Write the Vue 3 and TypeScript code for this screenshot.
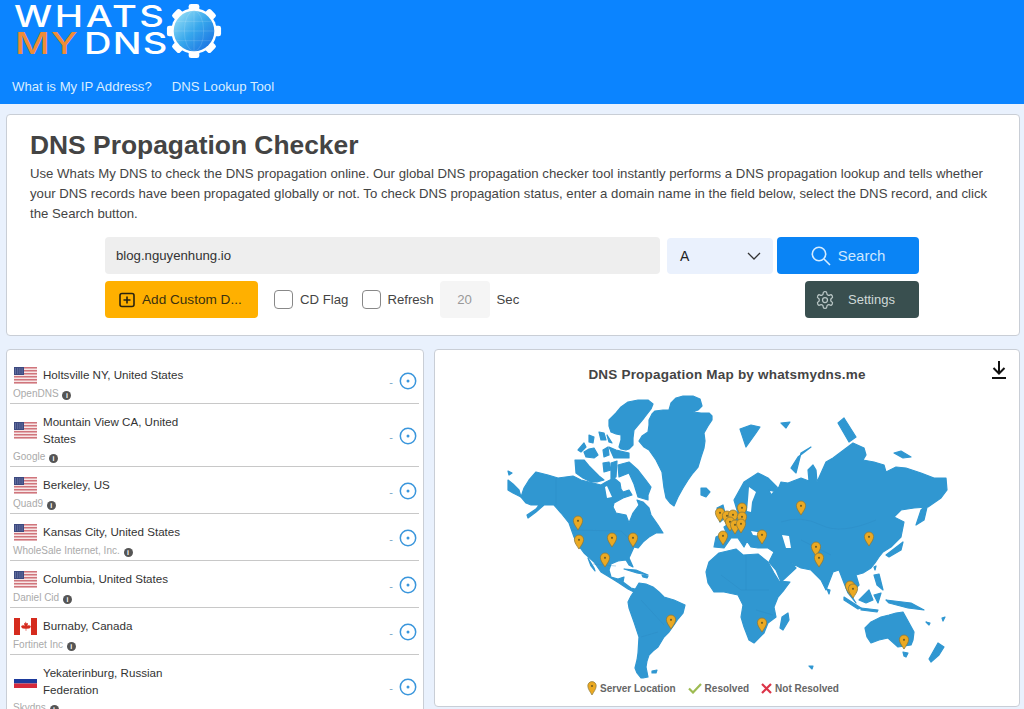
<template>
  <div class="page">
    <header class="topbar">
      <div class="logo">
        <div class="logo-text">
          <div class="logo-line">WHATS</div>
          <div class="logo-line logo-line-two"><span class="logo-my">MY</span> DNS</div>
        </div>
        <svg class="logo-gear" viewBox="0 0 60 60" width="58" height="58">
          <defs>
            <linearGradient id="globe" x1="0" y1="0" x2="1" y2="1">
              <stop offset="0" stop-color="#a5e8f7" />
              <stop offset="0.5" stop-color="#36a6ec" />
              <stop offset="1" stop-color="#1668e0" />
            </linearGradient>
          </defs>
          <g fill="#fff">
            <rect v-for="a in gearTeeth" :key="a" x="24.500" y="2" width="11" height="12" rx="2.500" :transform="`rotate(${a} 30 30)`" />
          </g>
          <circle cx="30" cy="30" r="23.500" fill="#fff" />
          <circle cx="30" cy="30" r="21" fill="url(#globe)" />
          <g fill="none" stroke="#fff" stroke-opacity="0.18" stroke-width="0.8">
            <ellipse cx="30" cy="30" rx="10" ry="21" />
            <path d="M30 9V51M9 30H51M12 20H48M12 40H48" />
          </g>
        </svg>
      </div>
      <nav class="topnav">
        <a>What is My IP Address?</a>
        <a>DNS Lookup Tool</a>
      </nav>
    </header>

    <section class="card intro">
      <h1>DNS Propagation Checker</h1>
      <p>Use Whats My DNS to check the DNS propagation online. Our global DNS propagation checker tool instantly performs a DNS propagation lookup and tells whether your DNS records have been propagated globally or not. To check DNS propagation status, enter a domain name in the field below, select the DNS record, and click the Search button.</p>

      <div class="form">
        <div class="form-row">
          <div class="domain">blog.nguyenhung.io</div>
          <div class="record">
            <span>A</span>
            <svg width="14" height="8" viewBox="0 0 14 8" fill="none" stroke="#333" stroke-width="1.3"><path d="M1 1l6 6 6-6" /></svg>
          </div>
          <button class="search">
            <svg width="20" height="20" viewBox="0 0 20 20" fill="none" stroke="#d5ecff" stroke-width="1.6"><circle cx="8" cy="8" r="6.700" /><path d="M13 13l6 6" /></svg>
            <span>Search</span>
          </button>
        </div>
        <div class="form-row">
          <button class="custom">
            <svg width="16" height="16" viewBox="0 0 16 16" fill="none" stroke="#2b2410" stroke-width="1.600"><rect x="1" y="1.500" width="14" height="13" rx="2" /><path d="M8 4.500v7M4.500 8h7" /></svg>
            <span>Add Custom D...</span>
          </button>
          <span class="check"></span><span class="check-label">CD Flag</span>
          <span class="check check-second"></span><span class="check-label refresh-label">Refresh</span>
          <div class="secs">20</div>
          <span class="check-label sec-label">Sec</span>
          <button class="settings">
            <svg width="20" height="20" viewBox="0 0 24 24" fill="none" stroke="#b9c6c5" stroke-width="1.500" stroke-linejoin="round"><path d="M12.220 2h-.44a2 2 0 0 0-2 2v.18a2 2 0 0 1-1 1.730l-.43.25a2 2 0 0 1-2 0l-.15-.08a2 2 0 0 0-2.730.73l-.22.38a2 2 0 0 0 .73 2.730l.15.1a2 2 0 0 1 1 1.720v.51a2 2 0 0 1-1 1.740l-.15.09a2 2 0 0 0-.73 2.730l.22.38a2 2 0 0 0 2.730.73l.15-.08a2 2 0 0 1 2 0l.43.25a2 2 0 0 1 1 1.730V20a2 2 0 0 0 2 2h.44a2 2 0 0 0 2-2v-.18a2 2 0 0 1 1-1.730l.43-.25a2 2 0 0 1 2 0l.15.08a2 2 0 0 0 2.730-.73l.22-.39a2 2 0 0 0-.73-2.730l-.15-.08a2 2 0 0 1-1-1.740v-.5a2 2 0 0 1 1-1.740l.15-.09a2 2 0 0 0 .73-2.730l-.22-.38a2 2 0 0 0-2.730-.73l-.15.08a2 2 0 0 1-2 0l-.43-.25a2 2 0 0 1-1-1.730V4a2 2 0 0 0-2-2z" /><circle cx="12" cy="12" r="3" /></svg>
            <span>Settings</span>
          </button>
        </div>
      </div>
    </section>

    <div class="results">
      <section class="card servers">
        <div v-for="s in servers" :key="s.city" class="server">
          <div class="server-info">
            <div class="server-city">
              <svg class="flag" viewBox="0 0 23 17" width="23" height="17">
                <template v-if="s.flag === 'us'">
                  <rect width="23" height="17" fill="#f7e6e6" />
                  <rect v-for="i in 6" :key="i" y="0" :transform="`translate(0 ${(i - 1) * 3})`" width="23" height="1.500" fill="#d0757c" />
                  <rect width="10" height="8" fill="#3d4a80" />
                  <path d="M1 2h8M1 4h8M1 6h8" stroke="#aab4d8" stroke-width="0.7" stroke-dasharray="1 1.200" />
                </template>
                <template v-else-if="s.flag === 'ca'">
                  <rect width="23" height="17" fill="#fff" />
                  <rect width="6" height="17" fill="#d52b1e" />
                  <rect x="17" width="6" height="17" fill="#d52b1e" />
                  <path d="M11.500 3.500l1.200 2 1.300-.6-.5 3 1.800-1.200.5 1.300 1.200-.2-.7 2-1 .7-3 .2v2h-.6v-2l-3-.2-1-.7-.7-2 1.200.2.500-1.300 1.800 1.200-.5-3 1.300.6z" fill="#d52b1e" />
                </template>
                <template v-else>
                  <rect y="2" width="23" height="4" fill="#fff" />
                  <rect y="6" width="23" height="4.500" fill="#1c3a9c" />
                  <rect y="10.500" width="23" height="4.500" fill="#d5293b" />
                </template>
              </svg>
              <span class="city-name">{{ s.city }}</span>
            </div>
            <div class="server-org">{{ s.org }} <span class="info">i</span></div>
          </div>
          <div class="server-status">
            <span class="dash">-</span>
            <svg width="18" height="18" viewBox="0 0 18 18" fill="none"><circle cx="9" cy="9" r="7.700" stroke="#3a96dc" stroke-width="1.500" /><circle cx="9" cy="9" r="1.500" fill="#3a96dc" /></svg>
          </div>
        </div>
      </section>

      <section class="card map-card">
        <h2>DNS Propagation Map by whatsmydns.me</h2>
        <svg class="download" width="18" height="20" viewBox="0 0 18 20" fill="none" stroke="#111" stroke-width="2"><path d="M9 1v12M3.500 8l5.500 5.500L14.500 8M2 18h14" /></svg>
        <svg class="map" viewBox="434 390 584 290" width="584" height="290">
          <g fill="#3097d1" stroke="#3097d1" stroke-width="1.200" stroke-linejoin="round">
            <polygon v-for="(p, i) in land" :key="i" :points="p" />
          </g>
          <g fill="#fff">
            <polygon v-for="(p, i) in water" :key="i" :points="p" />
          </g>
          <g fill="none" stroke="#2b87bf" stroke-width="0.5" stroke-opacity="0.7">
            <path v-for="(d, i) in borders" :key="i" :d="d" />
          </g>
          <g v-for="(p, i) in pins" :key="i" :transform="`translate(${p[0]} ${p[1]}) scale(1.150)`">
            <path d="M0 7C-2 3.800-4 1.500-4-1.200a4 4 0 0 1 8 0C4 1.500 2 3.800 0 7z" fill="#eba922" stroke="#8c7a3c" stroke-width="0.7" />
            <circle cx="0" cy="-1" r="0.900" fill="#6b5a22" />
          </g>
        </svg>
        <div class="legend">
          <span class="legend-item">
            <svg width="10" height="15" viewBox="-5 -6 10 15"><path d="M0 8C-2 4.500-4.200 2-4.200-1.200a4.200 4.200 0 0 1 8.400 0C4.200 2 2 4.500 0 8z" fill="#eba922" stroke="#8c7a3c" stroke-width="0.7" /><circle cx="0" cy="-1" r="1" fill="#6b5a22" /></svg>
            Server Location
          </span>
          <span class="legend-item">
            <svg width="14" height="11" viewBox="0 0 14 11" fill="none" stroke="#9dbb52" stroke-width="2.200"><path d="M1 5.500l4 4 8-8.500" /></svg>
            Resolved
          </span>
          <span class="legend-item">
            <svg width="11" height="11" viewBox="0 0 11 11" fill="none" stroke="#dc3448" stroke-width="2.200"><path d="M1 1l9 9M10 1l-9 9" /></svg>
            Not Resolved
          </span>
        </div>
      </section>
    </div>
  </div>
</template>

<script setup lang="ts">
interface Server {
  city: string
  org: string
  flag: 'us' | 'ca' | 'ru'
}

const gearTeeth = [0, 45, 90, 135, 180, 225, 270, 315]

const servers: Server[] = [
  { city: 'Holtsville NY, United States', org: 'OpenDNS', flag: 'us' },
  { city: 'Mountain View CA, United States', org: 'Google', flag: 'us' },
  { city: 'Berkeley, US', org: 'Quad9', flag: 'us' },
  { city: 'Kansas City, United States', org: 'WholeSale Internet, Inc.', flag: 'us' },
  { city: 'Columbia, United States', org: 'Daniel Cid', flag: 'us' },
  { city: 'Burnaby, Canada', org: 'Fortinet Inc', flag: 'ca' },
  { city: 'Yekaterinburg, Russian Federation', org: 'Skydns', flag: 'ru' }
]

// map shapes are in page coordinates, traced by hand
const land: string[] = [
  // greenland
  '670,403 675,398 682,396 692,396 699,399 701,406 697,410 692,412 700,413 708,413 711,416 711,420 707,426 703,433 704,441 703,448 700,457 697,467 692,473 687,480 682,488 677,497 673,506 669,503 665,498 663,488 662,480 661,472 655,460 648,450 643,447 638,441 641,436 647,432 648,425 648,420 651,414 654,411 662,410 668,410',
  // arctic canada
  '615,413 620,407 627,402 637,400 647,400 652,404 650,409 643,418 638,424 633,430 632,438 632,445 628,449 625,450 620,449 618,447 620,440 620,435 615,434 610,432 608,426 608,420',
  '577,450 583,443 585,447 580,452',
  '583,452 588,449 593,448 597,455 593,458 585,457',
  '602,450 607,447 608,455 603,457',
  '608,447 615,450 628,453 628,458 613,458',
  '574,460 583,460 588,466 592,470 598,476 603,480 596,482 590,482 582,478 575,473',
  '602,463 608,462 610,470 603,472',
  '610,463 616,461 615,477 610,479',
  '617,465 628,462 637,470 644,479 650,487 647,495 647,500 637,497 633,484 628,473 618,477',
  '598,432 603,433 605,440 600,440',
  '588,435 593,437 592,443 588,442',
  '606,435 611,443 608,442',
  '700,488 705,488 709,492 705,497 700,495',
  // north america
  '523,488 528,480 535,472 547,475 557,478 572,476 580,480 592,483 600,485 605,482 613,478 619,483 620,489 622,492 628,490 631,495 622,498 613,503 612,507 615,513 625,515 628,523 632,513 638,505 636,500 642,502 648,508 650,515 657,525 662,533 655,533 648,537 642,542 637,548 633,547 628,558 632,567 628,565 625,560 617,561 610,564 608,570 610,577 617,579 623,577 622,582 630,588 634,589 633,592 627,589 618,583 610,578 600,572 593,562 583,553 577,545 573,537 568,523 560,513 553,505 543,505 535,512 527,518 526,515 535,509 538,505 530,505 525,503 520,497',
  '507,480 512,484 518,490 520,497 512,493 507,490',
  '507,471 511,473 508,475',
  '587,558 593,568 594,571 590,566',
  // south america
  '638,583 645,584 652,587 658,592 663,597 673,600 684,605 682,613 677,619 673,625 668,632 663,637 657,647 652,651 648,655 646,661 645,667 647,677 642,678 640,678 636,673 634,668 636,660 637,653 638,637 633,622 628,608 627,602 630,596 632,593',
  '651,671 656,670 655,673 651,673',
  // cuba, hispaniola
  '623,569 635,570 647,575 636,573',
  '641,575 647,576 646,578 642,577',
  // africa
  '705,572 708,562 718,553 735,549 742,555 757,554 767,562 773,573 778,581 789,582 783,590 777,597 773,607 775,617 767,623 763,633 753,643 748,640 743,627 740,617 742,605 737,595 723,592 713,592 707,583',
  '781,617 787,613 788,620 782,630 779,628',
  // australia and around
  '864,628 870,622 880,617 888,615 895,613 902,612 907,621 913,632 912,640 910,645 897,647 887,638 878,640 870,643 866,637',
  '902,652 907,653 905,657 903,656',
  '937,643 943,647 938,655 930,662 928,659',
  '808,666 812,666 811,669',
  '925,622 929,623 928,625',
  '941,618 944,617 942,621',
  // eurasia
  '733,500 743,482 757,473 767,478 776,487 775,492 768,490 770,495 778,487 780,482 787,483 800,478 808,481 807,470 812,465 815,470 816,482 825,462 832,458 840,452 852,443 863,448 865,455 862,460 873,462 883,465 885,472 895,467 905,468 920,473 933,478 945,478 946,490 940,498 927,507 913,508 900,510 893,517 903,522 900,537 890,547 882,552 878,557 874,563 870,568 862,573 855,575 858,585 853,590 850,583 848,592 855,603 847,593 843,583 838,570 832,572 825,590 820,580 810,570 800,568 790,563 795,568 780,582 775,570 768,562 773,552 767,548 757,548 750,547 746,541 743,547 737,538 730,538 723,548 713,547 715,537 725,532 723,527 738,517',
  // islands of the north
  '739,429 750,425 759,427 755,433 745,447 742,438',
  '790,468 797,457 810,447 800,453 795,473',
  '837,423 843,418 855,437 848,442',
  '780,423 789,422 785,428',
  '893,453 900,451 910,457 902,458',
  '915,525 920,510 927,503 923,520',
  '716,508 722,505 725,517 719,522',
  // japan, indonesia, philippines
  '885,555 902,542 900,550 888,557',
  '843,597 860,608 857,609 843,600',
  '860,608 877,610 876,612 860,610',
  '858,600 868,590 872,600 865,603',
  '873,595 880,593 877,603',
  '873,575 878,574 882,590 876,585',
  '885,600 910,603 923,610 907,608 888,603',
  // sri lanka, taiwan
  '826,589 829,590 828,594',
  '873,567 875,566 874,570'
]

// seas that lie over the land shapes
const water: string[] = [
  '748,487 755,492 751,502 750,512 746,511 747,500',
  '781,535 788,536 790,548 785,548',
  '750,531 762,533 760,536 752,535',
  '604,487 606,486 611,497 606,498'
]

const borders: string[] = [
  'M555,505 V478 M570,530 L620,531 L635,545',
  'M592,564 L615,566 M640,600 L663,625 M640,637 L657,632',
  'M720,575 L740,590 L768,590 M745,555 V590 M755,610 L772,615',
  'M780,522 Q800,515 820,525 T875,520 M800,540 L830,555'
]

const pins: [number, number][] = [
  [577, 522], [578, 541], [611, 539], [632, 539], [604, 559], [670, 621], [761, 624],
  [719, 514], [722, 537], [800, 507], [761, 536], [815, 548], [818, 559], [868, 538],
  [849, 587], [852, 590], [903, 641], [726, 517], [732, 516], [741, 509], [741, 518],
  [729, 523], [734, 526], [740, 525]
]
</script>

<style scoped>
.page {
  height: 709px;
  overflow: hidden;
  background: #e9f1fd;
  font-family: "Liberation Sans", Arial, sans-serif;
  color: #333;
}

.topbar {
  background: #0b84ff;
  height: 104px;
  box-sizing: border-box;
  padding: 0 12px;
}

.logo {
  display: flex;
  align-items: flex-start;
  height: 69px;
}

.logo-text {
  padding: 3px 0 0 2px;
  width: 152px;
  color: #fff;
  font-family: Inter, "Liberation Sans", sans-serif;
  font-weight: 500;
  font-size: 30px;
  line-height: 26px;
  letter-spacing: 2px;
  white-space: nowrap;
}

.logo-line {
  height: 26px;
  transform: scaleX(1.270);
  transform-origin: left;
}

.logo-line-two {
  letter-spacing: 1px;
  word-spacing: -5px;
  margin-left: 1px;
  margin-top: 1px;
}

.logo-my {
  color: #ef8c38;
}

.logo-gear {
  margin: 2px 0 0 -1px;
}

.topnav {
  display: flex;
  gap: 20px;
  font-size: 13.200px;
  line-height: 18px;
  color: #d9edff;
  padding-top: 9px;
}

.card {
  background: #fff;
  border: 1px solid #c9ced6;
  border-radius: 4px;
  box-sizing: border-box;
}

.intro {
  margin: 10px 4px 13px 6px;
  height: 222px;
  padding: 14px 23px 0;
}

h1 {
  margin: 0;
  font-size: 26.400px;
  line-height: 32px;
  color: #444;
}

.intro p {
  margin: 3px 0 0;
  font-size: 13.200px;
  line-height: 20px;
  color: #444;
}

.form {
  margin: 13px 0 0 75px;
  width: 814px;
  display: flex;
  flex-direction: column;
  gap: 7px;
  font-size: 13.200px;
}

.form-row {
  display: flex;
  align-items: center;
  height: 37px;
}

.domain {
  width: 555px;
  height: 37px;
  box-sizing: border-box;
  padding-left: 11px;
  line-height: 37px;
  background: #eee;
  border-radius: 4px;
  color: #333;
}

.record {
  margin-left: 7px;
  width: 106px;
  height: 36px;
  box-sizing: border-box;
  padding: 0 12px 0 13px;
  display: flex;
  align-items: center;
  justify-content: space-between;
  background: #eaf1fd;
  border-radius: 4px;
  color: #222;
  font-size: 14px;
}

button {
  border: none;
  font-family: inherit;
  display: flex;
  align-items: center;
  height: 37px;
  border-radius: 4px;
}

.search {
  margin-left: 4px;
  width: 142px;
  justify-content: center;
  gap: 7px;
  background: #0a84f5;
  color: #cde8ff;
  font-size: 15px;
}

.custom {
  width: 153px;
  padding: 0 0 0 14px;
  gap: 7px;
  background: #ffb000;
  color: #3a3010;
  font-size: 13.600px;
}

.check {
  width: 17px;
  height: 17px;
  margin-left: 16px;
  border: 1px solid #888;
  border-radius: 4px;
  background: #fff;
}

.check-second {
  margin-left: 14px;
}

.check-label {
  margin-left: 7px;
  color: #444;
}

.refresh-label {
  margin-left: 6px;
}

.secs {
  width: 50px;
  height: 37px;
  margin-left: 6px;
  line-height: 37px;
  text-align: center;
  color: #999;
  background: #f5f5f5;
  border-radius: 4px;
}

.sec-label {
  flex: 1;
}

.settings {
  width: 114px;
  padding-left: 10px;
  gap: 13px;
  background: #394f4f;
  color: #cfd9d8;
  font-size: 13px;
}

.results {
  display: grid;
  grid-template-columns: 418px 586px;
  gap: 10px;
  margin: 0 4px 0 6px;
}

.servers {
  height: 400px;
  padding: 7px 4px 0 3px;
}

.server {
  display: flex;
  justify-content: space-between;
  align-items: center;
  padding: 10px 2px 2px 3px;
  border-bottom: 1px solid #c8c8c8;
}

.server-city {
  display: flex;
  align-items: center;
  gap: 6px;
  margin-left: 1px;
}

.flag {
  flex: none;
}

.city-name {
  max-width: 145px;
  font-size: 11.600px;
  line-height: 16.500px;
  color: #333;
}

.server-org {
  margin-top: 3px;
  font-size: 10px;
  line-height: 14px;
  color: #aaa;
}

.info {
  display: inline-block;
  width: 9px;
  height: 9px;
  margin-left: 1px;
  border-radius: 50%;
  background: #555;
  color: #fff;
  font-size: 7px;
  line-height: 9px;
  font-weight: bold;
  text-align: center;
  vertical-align: -1px;
}

.server-status {
  display: flex;
  align-items: center;
  gap: 6px;
  margin-bottom: 6px;
}

.dash {
  font-size: 11px;
  color: #7aa6c6;
  padding-top: 2px;
}

.map-card {
  position: relative;
  height: 358px;
  padding: 16px 0 0;
}

h2 {
  margin: 0;
  height: 24px;
  font-size: 13.500px;
  line-height: 18px;
  letter-spacing: 0.2px;
  text-align: center;
  color: #444;
}

.download {
  position: absolute;
  top: 10px;
  right: 11px;
}

.map {
  display: block;
}

.legend {
  display: flex;
  justify-content: center;
  gap: 12px;
  font-size: 10px;
  font-weight: bold;
  color: #666;
  padding: 1px 28px 0 0;
}

.legend-item {
  display: flex;
  align-items: center;
  gap: 3px;
}
</style>

<style>
html,
body {
  margin: 0;
  overflow: hidden;
}
</style>
